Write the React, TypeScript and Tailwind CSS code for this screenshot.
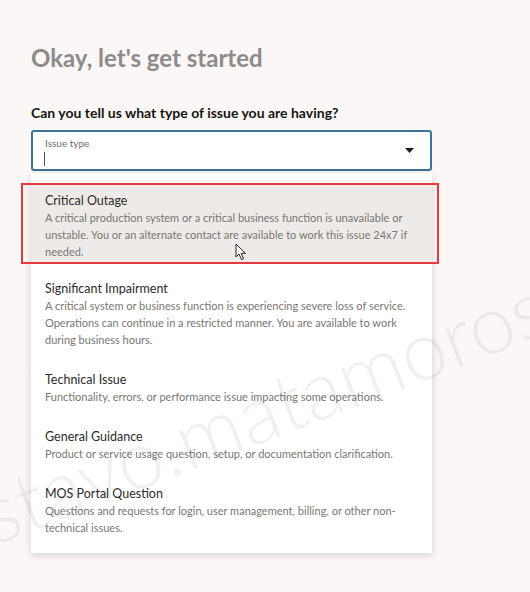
import React from 'react'

interface IssueOption {
  title: string
  lines: string[]
}

const options: IssueOption[] = [
  {
    title: 'Critical Outage',
    lines: [
      'A critical production system or a critical business function is unavailable or',
      'unstable. You or an alternate contact are available to work this issue 24x7 if',
      'needed.',
    ],
  },
  {
    title: 'Significant Impairment',
    lines: [
      'A critical system or business function is experiencing severe loss of service.',
      'Operations can continue in a restricted manner. You are available to work',
      'during business hours.',
    ],
  },
  {
    title: 'Technical Issue',
    lines: ['Functionality, errors, or performance issue impacting some operations.'],
  },
  {
    title: 'General Guidance',
    lines: ['Product or service usage question, setup, or documentation clarification.'],
  },
  {
    title: 'MOS Portal Question',
    lines: [
      'Questions and requests for login, user management, billing, or other non-',
      'technical issues.',
    ],
  },
]

const PointerCursor = () => (
  <svg width="12" height="18" viewBox="0 0 12 18" className="absolute left-[204px] top-[60px]">
    <path d="M1 1 L1 14 L4 11 L6.5 16.5 L8.5 15.6 L6.2 10.3 L10.5 10.3 Z" fill="#fff" stroke="#222" strokeWidth="1" strokeLinejoin="round" />
  </svg>
)

const App: React.FC = () => {
  return (
    <div className="relative w-[530px] h-[592px] overflow-hidden bg-[#faf7f6] px-[31px] pt-[42px] font-['Lato',sans-serif]">
      <div className="flex flex-col">
        <h1 className="text-[24px] leading-[32px] font-bold text-[#8d8b8b]">Okay, let's get started</h1>

        <p className="mt-[29px] text-[14px] leading-[20px] font-bold text-[#161513]">
          Can you tell us what type of issue you are having?
        </p>

        <div className="mt-[7px] flex w-[401px] h-[41px] items-center rounded-[3px] border-2 border-[#3a7593] bg-white pl-[11px] pr-[16px]">
          <div className="flex flex-1 flex-col pt-[2px]">
            <span className="pl-px text-[10px] leading-[13px] text-[#6f6d6b]">Issue type</span>
            <span className="mt-[2px] w-px h-[14px] bg-[#555]" />
          </div>
          <svg width="9" height="5" viewBox="0 0 9 5">
            <path d="M0 0 H9 L4.5 5 Z" fill="#1d1d1d" />
          </svg>
        </div>

        <div className="mt-[2px] flex w-[401px] flex-col gap-[11px] bg-white pt-[10px] pb-[14px] shadow-[0_2px_8px_rgba(0,0,0,0.16)]">
          {options.map((o, index) => (
            <div
              key={o.title}
              className={`relative flex flex-col px-[14px] pt-[9px] pb-[3px] ${index === 0 ? '-mb-[3px] bg-[#edeae8]' : ''}`}
            >
              <div className="text-[12.5px] leading-[17px] text-[#2c2b2a]">{o.title}</div>
              {o.lines.map((l) => (
                <div key={l} className="whitespace-nowrap text-[11px] leading-[17px] text-[#797674]">
                  {l}
                </div>
              ))}
              {index === 0 && (
                <>
                  <div className="absolute -left-[10px] -right-[7px] top-0 -bottom-[1px] border-2 border-[#e6383f]" />
                  <PointerCursor />
                </>
              )}
            </div>
          ))}
        </div>
      </div>

      {/* watermark over the capture */}
      <div className="pointer-events-none absolute left-[-98px] top-[506px] origin-left -rotate-[21deg] whitespace-nowrap text-[82px] leading-none font-light text-black/[0.06]">
        gustavo.matamoros
      </div>
    </div>
  )
}

export default App
